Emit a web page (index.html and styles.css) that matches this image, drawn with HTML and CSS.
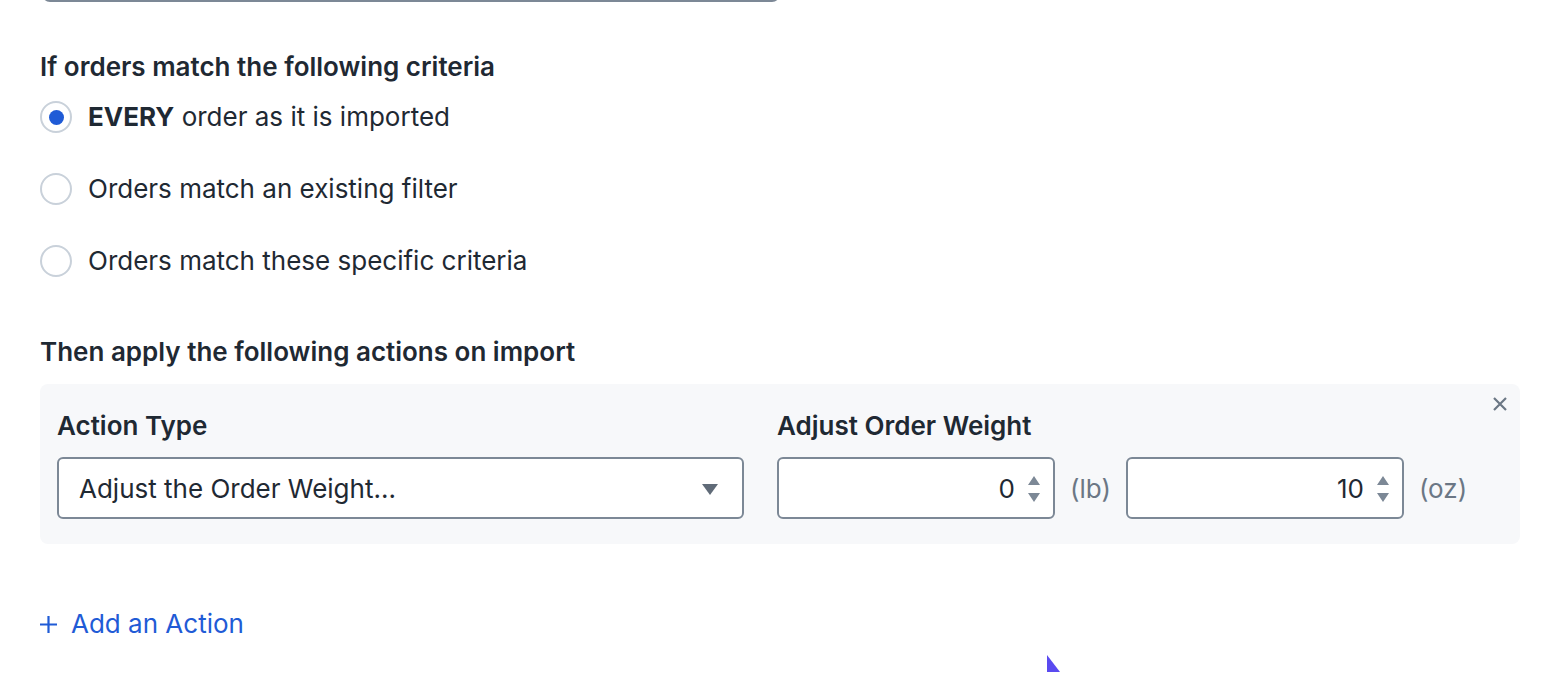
FILE: index.html
```html
<!DOCTYPE html>
<html>
<head>
<meta charset="utf-8">
<link rel="stylesheet" href="styles.css">
</head>
<body>
<div class="page">
  <div class="prev-field"></div>

  <section class="criteria">
    <h2 class="section-title">If orders match the following criteria</h2>
    <div class="radios">
      <label class="radio-row"><span class="radio checked"></span><span class="radio-text"><b>EVERY</b> order as it is imported</span></label>
      <label class="radio-row"><span class="radio"></span><span class="radio-text">Orders match an existing filter</span></label>
      <label class="radio-row"><span class="radio"></span><span class="radio-text">Orders match these specific criteria</span></label>
    </div>
  </section>

  <section class="actions">
    <h2 class="section-title">Then apply the following actions on import</h2>
    <div class="action-card">
      <button class="close" aria-label="Remove">
        <svg width="16" height="16" viewBox="0 0 16 16"><path d="M2 2 L14 14 M14 2 L2 14" stroke="#6b7785" stroke-width="2.2" stroke-linecap="butt" fill="none"/></svg>
      </button>
      <div class="field type-field">
        <div class="field-label">Action Type</div>
        <div class="select">
          <span>Adjust the Order Weight...</span>
          <svg class="caret" width="16" height="11" viewBox="0 0 16 11"><path d="M0 0 H16 L8 11 Z" fill="#606b78"/></svg>
        </div>
      </div>
      <div class="field weight-field">
        <div class="field-label">Adjust Order Weight</div>
        <div class="weight-row">
          <div class="num-input"><span class="num">0</span><span class="spin"><svg width="14" height="28" viewBox="0 0 14 28"><path d="M7 1 L13 10 H1 Z M7 27 L13 18 H1 Z" fill="#7c8896"/></svg></span></div>
          <span class="unit">(lb)</span>
          <div class="num-input"><span class="num">10</span><span class="spin"><svg width="14" height="28" viewBox="0 0 14 28"><path d="M7 1 L13 10 H1 Z M7 27 L13 18 H1 Z" fill="#7c8896"/></svg></span></div>
          <span class="unit">(oz)</span>
        </div>
      </div>
    </div>
  </section>

  <a class="add-action" href="#"><svg class="plus" width="17" height="17" viewBox="0 0 17 17"><path d="M8.5 0 V17 M0 8.5 H17" stroke="#1f5bd6" stroke-width="2.2" fill="none"/></svg>Add an Action</a>

  <svg class="cursor" width="20" height="20" viewBox="0 0 20 20"><path d="M1 1 L1 18 L14 18 Z" fill="#5a4af0"/></svg>
</div>
</body>
</html>
```

FILE: styles.css
```css
* { box-sizing: border-box; }
html, body { margin: 0; padding: 0; background: #ffffff; }
body {
  font-family: Inter, Roboto, "Noto Sans", "Liberation Sans", sans-serif;
  color: #1f2933;
  overflow: hidden;
  height: 678px;
}
.page {
  position: relative;
  padding: 0 36px 0 40px;
  height: 678px;
}
.prev-field {
  width: 738px;
  height: 10px;
  margin: -8px 0 0 2px;
  border: 2px solid #7c8896;
  border-top: none;
  border-radius: 0 0 8px 8px;
}
.section-title {
  margin: 0;
  font-size: 26px;
  font-weight: 600;
  line-height: 32px;
  color: #1f2933;
}
.criteria { margin-top: 49px; }
.radios {
  display: flex;
  flex-direction: column;
  gap: 40px;
  margin-top: 18px;
}
.radio-row {
  display: flex;
  align-items: center;
  gap: 16px;
  height: 32px;
}
.radio {
  width: 32px;
  height: 32px;
  border-radius: 50%;
  border: 2px solid #c9d1da;
  display: flex;
  align-items: center;
  justify-content: center;
  flex: none;
  background: #fff;
}
.radio.checked::after {
  content: "";
  width: 15px;
  height: 15px;
  border-radius: 50%;
  background: #1f5bd6;
}
.radio-text {
  font-size: 26px;
  color: #1f2933;
  line-height: 32px;
}
.radio-text b { font-weight: 700; }

.actions { margin-top: 59px; }
.action-card {
  position: relative;
  margin-top: 16px;
  background: #f7f8fa;
  border-radius: 8px;
  height: 160px;
  padding: 24px 17px 0 17px;
  display: flex;
  gap: 33px;
}
.close {
  position: absolute;
  top: 12px;
  right: 12px;
  width: 16px;
  height: 16px;
  padding: 0;
  border: none;
  background: none;
  display: flex;
}
.field-label {
  font-size: 26px;
  font-weight: 600;
  line-height: 36px;
  color: #1f2933;
  margin-bottom: 13px;
}
.type-field { width: 687px; }
.select {
  height: 62px;
  border: 2px solid #7c8896;
  border-radius: 6px;
  background: #fff;
  display: flex;
  align-items: center;
  justify-content: space-between;
  padding: 0 24px 0 20px;
  font-size: 26px;
  color: #1f2933;
}
.caret { margin-top: 2px; }
.weight-row {
  display: flex;
  align-items: center;
}
.num-input {
  width: 278px;
  height: 62px;
  border: 2px solid #7c8896;
  border-radius: 6px;
  background: #fff;
  display: flex;
  align-items: center;
  justify-content: flex-end;
  padding-right: 12px;
  font-size: 26px;
  color: #1f2933;
}
.num { margin-right: 12px; }
.spin { display: flex; margin-top: 2px; }
.unit {
  font-size: 26px;
  color: #6b7785;
  margin: 0 15px;
}
.add-action {
  display: inline-flex;
  align-items: center;
  margin-top: 64px;
  font-size: 26px;
  color: #1f5bd6;
  text-decoration: none;
  line-height: 32px;
}
.plus {
  margin-right: 14px;
  margin-top: 1px;
  flex: none;
}
.cursor {
  position: absolute;
  left: 1046px;
  top: 662px;
}
```
